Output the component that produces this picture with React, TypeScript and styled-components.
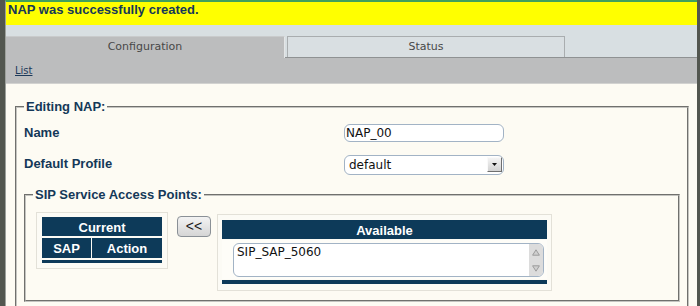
import React from "react";
import styled, { createGlobalStyle } from "styled-components";

const NAVY = "#0d3a59";
const TEXT = "#143858";

const GlobalStyle = createGlobalStyle`
  html, body { margin: 0; padding: 0; }
  body { background: #52564f; overflow: hidden; }
  * { box-sizing: border-box; }
`;

const Page = styled.div`
  height: 306px;
  padding: 0 3px 0 5px;
  background: #52564f;
  overflow: hidden;
`;

const Frame = styled.div`
  height: 100%;
  background: #fdfbf3;
  border-top: 2px solid #41a05c;
  border-left: 1px solid #9da19c;
`;

const Notice = styled.div`
  height: 23px;
  line-height: 23px;
  padding-left: 2px;
  background: #ffff00;
  color: ${TEXT};
  font: bold 13px "Liberation Sans", Arial, sans-serif;
`;

const TabStrip = styled.div`
  display: flex;
  align-items: flex-start;
  gap: 2px;
  height: 33px;
  padding-top: 11px;
  background: #d8dfe2;
  border-bottom: 1px solid #8f9293;
`;

const Tab = styled.div<{ $active?: boolean }>`
  flex: 0 0 ${(p) => (p.$active ? 279 : 278)}px;
  height: ${(p) => (p.$active ? 22 : 21)}px;
  display: flex;
  align-items: center;
  justify-content: center;
  padding-bottom: ${(p) => (p.$active ? 2 : 1)}px;
  background: ${(p) => (p.$active ? "#bcbdbe" : "#d9dfe2")};
  border: 1px solid ${(p) => (p.$active ? "#c9cbcc" : "#a9adaf")};
  border-left: ${(p) => (p.$active ? "none" : "1px solid #a9adaf")};
  border-bottom: none;
  border-right-color: ${(p) => (p.$active ? "#e4e6e7" : "#a9adaf")};
  color: #484848;
  font: 11px "DejaVu Sans", sans-serif;
`;

const SubBar = styled.div`
  height: 26px;
  display: flex;
  align-items: center;
  padding: 0 0 1px 9px;
  background: #bcbdbe;
  border-bottom: 1px solid #d2d2d0;
`;

const NavLink = styled.a`
  color: #1d3a5a;
  font: 10px "DejaVu Sans", sans-serif;
  text-decoration: underline;
  cursor: pointer;
`;

const Content = styled.div`
  padding: 15px 8px 0 9px;
`;

const Fieldset = styled.fieldset<{ $pb?: number }>`
  margin: 0;
  min-width: 0;
  padding: 0 7px ${(p) => p.$pb ?? 8}px 7px;
  border: 2px groove #c4c4c0;
`;

const Legend = styled.legend`
  padding: 0 2px;
  color: ${TEXT};
  font: bold 13px/15px "Liberation Sans", Arial, sans-serif;
`;

const FormGrid = styled.div`
  display: grid;
  grid-template-columns: 320px 160px;
  grid-template-rows: 30px 31px;
  align-items: center;
  margin: 4px 0 8px;
`;

const Label = styled.div`
  color: ${TEXT};
  font: bold 13px "Liberation Sans", Arial, sans-serif;
  padding-bottom: 1px;
`;

const TextInput = styled.input`
  width: 160px;
  height: 18px;
  padding: 0 1px;
  margin: 0;
  border: 1px solid #a2b3c5;
  border-radius: 6px;
  background: #fff;
  color: #111;
  font: 12px "DejaVu Sans", sans-serif;
  outline: none;
`;

const SelectBox = styled.div`
  width: 160px;
  height: 20px;
  margin-top: 2px;
  display: flex;
  align-items: center;
  padding-left: 4px;
  border: 1px solid #a2b3c5;
  border-radius: 6px;
  background: #fff;
  color: #111;
  font: 12px "DejaVu Sans", sans-serif;
`;

const SelectText = styled.span`
  flex: 1;
`;

const DropButton = styled.span`
  width: 15px;
  height: 15px;
  margin-right: 1px;
  display: flex;
  align-items: center;
  justify-content: center;
  background: linear-gradient(#f4f4f4, #d2d2d2);
  border: 1px solid;
  border-color: #fafafa #6f6f6f #6f6f6f #fafafa;
`;

const SapArea = styled.div`
  display: flex;
  align-items: flex-start;
  margin: 10px 0 0 3px;
`;

const Box = styled.div<{ $mt: number }>`
  margin-top: ${(p) => p.$mt}px;
  border: 1px solid #e3e1d8;
  background: #fcfbf5;
`;

const CurrentBox = styled(Box)`
  width: 132px;
  padding: 4px 5px 5px;
`;

const AvailableBox = styled(Box)`
  width: 335px;
  margin-left: 6px;
  padding: 5px 4px 6px;
`;

const GridTable = styled.div`
  display: grid;
  grid-template-columns: 49px 1fr;
  grid-template-rows: 19px 20px 3px;
  gap: 2px 1px;
`;

const HeadCell = styled.div<{ $span?: number }>`
  grid-column: span ${(p) => p.$span ?? 1};
  display: flex;
  align-items: center;
  justify-content: center;
  background: ${NAVY};
  color: #fff;
  font: bold 13px "Liberation Sans", Arial, sans-serif;
  padding-top: 1px;
`;

const FootBar = styled.div<{ $span?: number }>`
  grid-column: span ${(p) => p.$span ?? 1};
  background: ${NAVY};
`;

const ShiftButton = styled.button`
  width: 34px;
  height: 21px;
  margin: 4px 0 0 9px;
  padding: 0 0 1px;
  border: 1px solid #8a9096;
  border-radius: 4px;
  background: linear-gradient(#f3f3f3, #d5d5d5);
  color: #1a1a1a;
  font: 14px "Liberation Sans", Arial, sans-serif;
  line-height: 1;
`;

const AvailHead = styled.div`
  height: 19px;
  display: flex;
  align-items: center;
  justify-content: center;
  background: ${NAVY};
  color: #fff;
  font: bold 13px "Liberation Sans", Arial, sans-serif;
  padding-top: 1px;
`;

const ListRow = styled.div`
  margin-top: 1px;
  padding: 3px 3px 2px 11px;
  background: #fefdf8;
`;

const ListBox = styled.div`
  height: 34px;
  display: flex;
  border: 1px solid #a2b3c5;
  border-radius: 6px;
  background: #fff;
  overflow: hidden;
`;

const ListItems = styled.div`
  flex: 1;
  padding: 1px 0 0 3px;
  color: #111;
  font: 12px/14px "DejaVu Sans", sans-serif;
`;

const ScrollTrack = styled.div`
  width: 14px;
  display: flex;
  flex-direction: column;
  align-items: center;
  justify-content: space-between;
  padding: 5px 0 4px;
  background: #dcdcdc;
`;

const AvailFoot = styled.div`
  height: 4px;
  margin-top: 1px;
  background: ${NAVY};
`;

const Arrow = ({ up }: { up?: boolean }) => (
  <svg width="8" height="7" viewBox="0 0 8 7">
    <path
      d={up ? "M4 0.8 L7.4 6.2 L0.6 6.2 Z" : "M4 6.2 L7.4 0.8 L0.6 0.8 Z"}
      fill="#cfcfcf"
      stroke="#9b9b9b"
      strokeWidth="1"
    />
  </svg>
);

export default function App() {
  return (
    <>
      <GlobalStyle />
      <Page>
        <Frame>
          <Notice>NAP was successfully created.</Notice>
          <TabStrip>
            <Tab $active>Configuration</Tab>
            <Tab>Status</Tab>
          </TabStrip>
          <SubBar>
            <NavLink>List</NavLink>
          </SubBar>
          <Content>
            <Fieldset>
              <Legend>Editing NAP:</Legend>
              <FormGrid>
                <Label>Name</Label>
                <TextInput readOnly defaultValue="NAP_00" />
                <Label>Default Profile</Label>
                <SelectBox>
                  <SelectText>default</SelectText>
                  <DropButton>
                    <svg width="5" height="3" viewBox="0 0 5 3">
                      <path d="M0 0 L5 0 L2.5 3 Z" fill="#111" />
                    </svg>
                  </DropButton>
                </SelectBox>
              </FormGrid>
              <Fieldset $pb={9}>
                <Legend>SIP Service Access Points:</Legend>
                <SapArea>
                  <CurrentBox $mt={0}>
                    <GridTable>
                      <HeadCell $span={2}>Current</HeadCell>
                      <HeadCell>SAP</HeadCell>
                      <HeadCell>Action</HeadCell>
                      <FootBar $span={2} />
                    </GridTable>
                  </CurrentBox>
                  <ShiftButton>&lt;&lt;</ShiftButton>
                  <AvailableBox $mt={2}>
                    <AvailHead>Available</AvailHead>
                    <ListRow>
                      <ListBox>
                        <ListItems>SIP_SAP_5060</ListItems>
                        <ScrollTrack>
                          <Arrow up />
                          <Arrow />
                        </ScrollTrack>
                      </ListBox>
                    </ListRow>
                    <AvailFoot />
                  </AvailableBox>
                </SapArea>
              </Fieldset>
            </Fieldset>
          </Content>
        </Frame>
      </Page>
    </>
  );
}
